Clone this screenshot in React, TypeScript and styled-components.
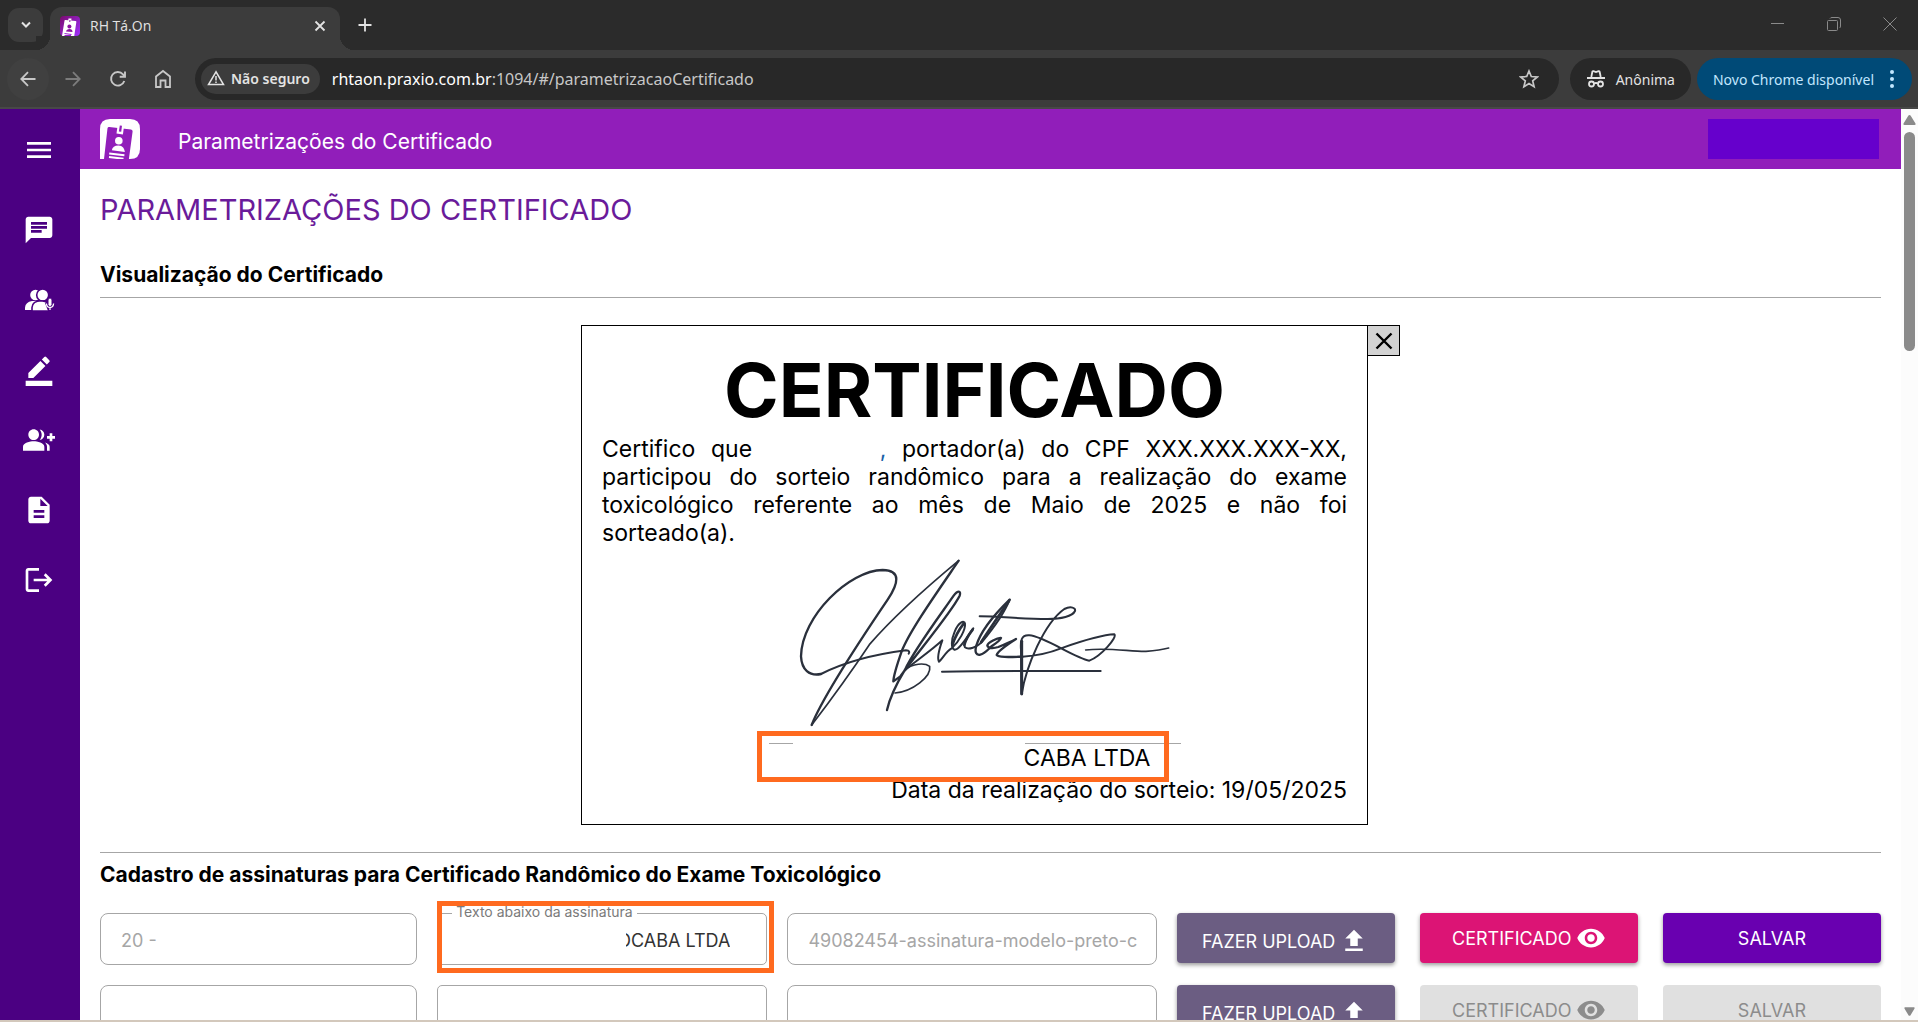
import React from "react";
import styled, { createGlobalStyle, css } from "styled-components";
import {
  MdBorderColor,
  MdChat,
  MdDescription,
  MdGroupAdd,
  MdLogout,
  MdMenu,
  MdUpload,
  MdVisibility,
} from "react-icons/md";

const GlobalStyle = createGlobalStyle`
  * { box-sizing: border-box; }
  body { margin: 0; background: #fff; font-family: Inter, "Open Sans", sans-serif; }
  button, input { font-family: inherit; }
  button { padding: 0; border: 0; background: none; color: inherit; }
  h1, h2, h3, p { margin: 0; }
`;

/* ---------- browser frame ---------- */

const Window = styled.div`
  height: 100vh;
  display: flex;
  flex-direction: column;
  overflow: hidden;
  border-bottom: 2px solid #d3c8bc;
`;

const TabStrip = styled.div`
  flex: none;
  height: 50px;
  padding: 0 16px 0 8px;
  display: flex;
  align-items: flex-start;
  background: #2b2b2b;
  color: #e3e3e3;
  font-family: "Open Sans", "Noto Sans", sans-serif;
`;

const TabSearch = styled.button`
  width: 35px;
  height: 34px;
  margin-top: 8px;
  display: grid;
  place-items: center;
  border-radius: 11px;
  background: #3c3c3c;
`;

const Tab = styled.div`
  position: relative;
  width: 290px;
  height: 43px;
  margin: 7px 0 0 7px;
  padding: 0 13px 6px 10px;
  display: flex;
  align-items: center;
  gap: 10px;
  border-radius: 12px 12px 0 0;
  background: #3c3c3c;
  font-size: 14px;

  &::before,
  &::after {
    content: "";
    position: absolute;
    bottom: 0;
    width: 14px;
    height: 14px;
  }
  &::before {
    left: -14px;
    background: radial-gradient(circle at 0 0, #2b2b2b 14px, #3c3c3c 14px);
  }
  &::after {
    right: -14px;
    background: radial-gradient(circle at 100% 0, #2b2b2b 14px, #3c3c3c 14px);
  }
`;

const TabTitle = styled.span`
  flex: 1;
`;

const PlainButton = styled.button<{ $w?: number; $h?: number }>`
  width: ${(p) => p.$w ?? 24}px;
  height: ${(p) => p.$h ?? 24}px;
  flex: none;
  display: grid;
  place-items: center;
`;

const WindowControls = styled.div`
  margin-left: auto;
  display: flex;
  gap: 32px;
  padding-top: 12px;
  color: #8a8a8a;
`;

const Toolbar = styled.div`
  flex: none;
  height: 59px;
  padding: 8px 6px 7px 7px;
  display: flex;
  align-items: center;
  background: #3c3c3c;
  border-bottom: 2px solid #484848;
  color: #c7c7c7;
  font-family: "Noto Sans", "Open Sans", sans-serif;
`;

const NavButton = styled.button<{ $ring?: boolean; $dim?: boolean }>`
  width: 42px;
  height: 42px;
  margin-right: 3px;
  flex: none;
  display: grid;
  place-items: center;
  border-radius: 50%;
  background: ${(p) => (p.$ring ? "#404040" : "transparent")};
  color: ${(p) => (p.$dim ? "#7c7c7c" : "#c7c7c7")};
`;

const AddressBar = styled.div`
  flex: 1;
  height: 42px;
  margin-left: 8px;
  padding: 0 18px 0 6px;
  display: flex;
  align-items: center;
  border-radius: 21px;
  background: #282828;
`;

const SecurityChip = styled.button`
  height: 30px;
  padding: 0 10px 2px 6px;
  display: flex;
  align-items: center;
  gap: 6px;
  border-radius: 15px;
  background: #3c3c3c;
  color: #e3e3e3;
  font-size: 14px;
  font-weight: 600;
`;

const Url = styled.span`
  flex: 1;
  margin-left: 12px;
  font-size: 16px;
  color: #c7c7c7;
  b {
    color: #fff;
    font-weight: 400;
  }
`;

const Pill = styled.button<{ $update?: boolean }>`
  height: 42px;
  flex: none;
  display: flex;
  align-items: center;
  gap: 10px;
  border-radius: 21px;
  font-size: 14px;
  ${(p) =>
    p.$update
      ? css`
          margin-left: 6px;
          padding: 0 14px 0 16px;
          gap: 12px;
          background: #004a77;
          color: #c2e7ff;
        `
      : css`
          margin-left: 11px;
          padding: 0 16px;
          background: #282828;
          color: #e3e3e3;
        `}
`;

/* ---------- application shell ---------- */

const Shell = styled.div`
  flex: 1;
  min-height: 0;
  display: flex;
`;

const Sidebar = styled.nav`
  flex: none;
  width: 80px;
  padding: 25px 2px 0 0;
  display: flex;
  flex-direction: column;
  align-items: center;
  gap: 38px;
  background: #4b0082;
  color: #fff;
`;

const SideButton = styled.button<{ $first?: boolean }>`
  width: 32px;
  height: 32px;
  margin-bottom: ${(p) => (p.$first ? 10 : 0)}px;
  display: grid;
  place-items: center;
`;

const Page = styled.div`
  flex: 1;
  min-width: 0;
  display: flex;
  flex-direction: column;
  overflow: hidden;
`;

const AppHeader = styled.header`
  flex: none;
  height: 60px;
  padding: 10px 22px 10px 20px;
  display: flex;
  align-items: center;
  background: #911eba;
  color: #fff;
`;

const HeaderTitle = styled.h2`
  margin-left: 38px;
  padding-top: 4px;
  font-size: 21px;
  font-weight: 400;
`;

const UserBlock = styled.div`
  width: 171px;
  height: 40px;
  margin-left: auto;
  background: #6600cc;
`;

const Content = styled.main`
  padding: 23px 20px 0;
`;

const PageTitle = styled.h1`
  line-height: 36px;
  font-size: 29px;
  font-weight: 400;
  color: #6a1b9a;
`;

const SectionTitle = styled.h3<{ $lead?: boolean }>`
  margin-top: ${(p) => (p.$lead ? 35 : 10)}px;
  line-height: 24px;
  font-size: 21px;
  font-weight: 700;
`;

const Rule = styled.hr<{ $above: number }>`
  height: 1px;
  margin: ${(p) => p.$above}px 0 0;
  border: 0;
  background: #a6a6a6;
`;

/* ---------- certificate ---------- */

const Preview = styled.section`
  margin-top: 27px;
  display: flex;
  justify-content: center;
  align-items: flex-start;
`;

const Certificate = styled.article`
  flex: 0 1 787px;
  padding: 22px 20px 20px;
  border: 1px solid #000;
  font-size: 23px;
  line-height: 28px;
`;

const CloseButton = styled.button`
  width: 33px;
  height: 31px;
  margin-left: -1px;
  display: grid;
  place-items: center;
  border: 1px solid #000;
  background: #d3d3d3;
`;

const CertificateTitle = styled.h2`
  line-height: 84px;
  font-size: 74px;
  font-weight: 700;
  text-align: center;
`;

const CertificateText = styled.p`
  margin-top: 3px;
  text-align: justify;
`;

const BlankName = styled.span`
  display: inline-block;
  width: 112px;
`;

const Comma = styled.span`
  color: #1a5fa8;
`;

const Signature = styled.svg`
  display: block;
  width: 392px;
  height: 170px;
  margin: 10px auto 16px;
  fill: none;
  stroke: #2a303c;
  stroke-linecap: round;
  stroke-linejoin: round;
`;

const Signer = styled.div`
  position: relative;
  width: 412px;
  margin: 0 auto;
`;

const SignerLine = styled.div`
  display: flex;
  justify-content: space-between;
`;

const LineSegment = styled.span<{ $w: number }>`
  width: ${(p) => p.$w}px;
  height: 1px;
  background: #a6a6a6;
`;

const SignerName = styled.p`
  padding-right: 30px;
  text-align: right;
`;

const DrawDate = styled.p`
  margin-top: 4px;
  text-align: right;
`;

const Highlight = styled.div<{ $inset: string }>`
  position: absolute;
  inset: ${(p) => p.$inset};
  border: 5px solid #ff6a1f;
  pointer-events: none;
`;

/* ---------- signature rows ---------- */

const Rows = styled.div`
  margin-top: 26px;
  display: grid;
  gap: 20px;
`;

const Row = styled.form`
  display: grid;
  grid-template-columns: 317fr 330fr 369fr 704fr;
  gap: 20px;
`;

const Actions = styled.div`
  display: grid;
  grid-template-columns: repeat(3, 1fr);
  gap: 25px;
`;

const Field = styled.div`
  position: relative;
  height: 52px;
`;

const TextInput = styled.input<{ $right?: boolean }>`
  width: 100%;
  height: 52px;
  padding: 2px 18px 0 20px;
  border: 1px solid #a6a6a6;
  border-radius: 8px;
  background: #fff;
  color: ${(p) => (p.$right ? "#333" : "#a6a6a6")};
  font-size: 18px;
  ${(p) =>
    p.$right &&
    css`
      padding-right: 36px;
      text-align: right;
      border-radius: 5px;
    `}
`;

const FloatingLabel = styled.label`
  position: absolute;
  left: 15px;
  top: -9px;
  padding: 0 4px;
  background: #fff;
  color: #7a7a7a;
  font-size: 14px;
  line-height: 16px;
`;

const Mask = styled.span`
  position: absolute;
  left: 16px;
  top: 10px;
  bottom: 10px;
  right: 141px;
  background: #fff;
`;

const tones = {
  upload: "#6b5d82",
  view: "#dc1475",
  save: "#6900b0",
};

const ActionButton = styled.button<{ $tone: keyof typeof tones }>`
  height: 50px;
  padding-top: ${(p) => (p.$tone === "upload" ? 6 : 0)}px;
  display: flex;
  align-items: center;
  justify-content: center;
  gap: 4px;
  border-radius: 4px;
  background: ${(p) => tones[p.$tone]};
  box-shadow: 0 2px 4px rgba(0, 0, 0, 0.4);
  color: #fff;
  font-size: 18px;
  &:disabled {
    background: #e0e0e0;
    color: #8c8c8c;
    box-shadow: none;
  }
`;

/* ---------- scroll bar ---------- */

const ScrollTrack = styled.div`
  flex: none;
  width: 17px;
  padding: 6px 0 4px;
  display: flex;
  flex-direction: column;
  align-items: center;
  justify-content: space-between;
  background: #fcfcfc;
`;

const ScrollTop = styled.div`
  display: grid;
  justify-items: center;
  gap: 7px;
`;

const ScrollThumb = styled.div`
  width: 11px;
  height: 219px;
  border-radius: 6px;
  background: #8a8a8a;
`;

const stroke = { fill: "none", stroke: "currentColor" } as const;

function BadgeMark({ size, card }: { size: number; card: string }) {
  return (
    <svg width={size} height={size} viewBox="0 0 40 40">
      <defs>
        <linearGradient id="badge" x1="0" y1="0" x2="1" y2="1">
          <stop offset="0" stopColor="#7a0b6d" />
          <stop offset="1" stopColor="#a030ff" />
        </linearGradient>
      </defs>
      {card === "dark" ? (
        <>
          <rect width="40" height="40" rx="8" fill="url(#badge)" />
          <path d="M9 9.500Q9 7.500 11 8l20 2q2 .2 1.700 2.200L28.500 40H4z" fill="#fff" />
          <path d="M17 5h6l-1 9h-6z" fill="#fff" />
          <path d="M19 8h2l-.5 4h-2z" fill="#8a12a0" />
          <circle cx="18.800" cy="21" r="4" fill="#8a12a0" />
          <path d="M12 31q1-5 7-5t6 6z" fill="#8a12a0" />
          <path d="M9 35l14 2M9 39h13" stroke="#9a20d0" strokeWidth="2" />
        </>
      ) : (
        <>
          <path d="M10 0h20q10 0 10 10v20q0 10-10 10H0V10Q0 0 10 0z" fill="#fff" />
          <path d="M7.500 9.300q.3-1.500 1.800-1.300L31 10.600q1.800.3 1.600 2L28.900 40H4z" fill={card} />
          <path d="M17.800 5l6.400.9-1.300 9.500-6.400-.9z" fill="#fff" />
          <path d="M19.800 6.500l2.200.3-.8 6-2.300-.3z" fill={card} />
          <circle cx="18.800" cy="21.800" r="3.800" fill="#fff" />
          <path d="M11.800 31.300q.8-5 6.800-4.900 5.900.5 6.300 6.700z" fill="#fff" />
          <path d="M9.200 34.600l15.200 1.600M9 38l14.500 1.800" stroke="#fff" strokeWidth="2" />
        </>
      )}
    </svg>
  );
}

function PeopleMic() {
  return (
    <svg width="32" height="32" viewBox="0 0 32 32" fill="#fff">
      <circle cx="12.500" cy="11" r="5.300" />
      <path d="M2 26v-2.500Q2.500 18 9 17h4v9z" />
      <g stroke="#4b0082" strokeWidth="1.600">
        <circle cx="19.700" cy="11" r="6" />
        <path d="M9 27v-3.500Q9.500 17 18 16.800q4 0 8 3V27z" />
      </g>
      <path d="M22 19h10v8H25z" fill="#4b0082" />
      <rect x="25" y="14" width="4" height="8.500" rx="2" stroke="#4b0082" strokeWidth="1" />
      <path d="M23.400 19.500q.4 4 3.600 4t3.600-4M27 23.500V26" fill="none" stroke="#fff" strokeWidth="1.300" />
    </svg>
  );
}

function SignatureDrawing() {
  return (
    <Signature viewBox="-6 22 1176 510" aria-label="Assinatura">
      <path
        strokeWidth="7"
        d="M92 526C120 455 215 305 320 150C352 102 362 62 305 61C205 62 62 200 60 320C62 360 85 380 120 373"
      />
      <path strokeWidth="6" d="M120 373C170 348 250 318 375 302C386 302 386 308 383 312" />
      <path strokeWidth="5" d="M92 526C150 450 215 360 265 285C330 210 440 110 533 33" />
      <path
        strokeWidth="7"
        d="M533 33C470 125 385 245 362 305C348 345 338 375 337 395L358 380C400 320 510 190 536 138C541 122 530 122 518 138C475 200 400 300 372 360C345 405 325 450 318 481"
      />
      <path strokeWidth="5" d="M372 360C395 342 430 338 446 350C452 380 395 425 342 430" />
      <path strokeWidth="6" d="M372 362C395 340 440 312 484 272C474 300 468 326 474 336C484 328 494 306 512 296C535 275 554 240 552 222C550 210 532 218 521 246C510 272 510 294 520 300C534 304 560 258 577 236C566 252 544 282 552 293C562 302 588 292 602 278C634 240 670 190 686 150" />
      <path strokeWidth="8" d="M514 286C522 262 534 240 548 222M550 286C554 268 564 254 575 240M600 278C625 240 655 195 684 154" />
      <path
        strokeWidth="7"
        d="M686 150C650 185 600 240 586 288C580 308 586 318 598 315C612 312 624 296 634 288C646 280 658 272 660 265C650 264 620 278 619 288C622 298 640 296 652 292C672 284 690 276 705 268C680 284 650 306 647 316C652 324 690 322 724 321"
      />
      <path
        strokeWidth="6"
        d="M724 321C770 318 810 308 840 296C900 275 960 255 1000 254C1010 262 960 320 925 333C880 325 790 260 745 257C720 255 718 275 720 300L722 434C735 350 790 220 850 178C870 168 885 175 882 184C875 200 840 208 800 208C720 208 660 200 596 200"
      />
      <path strokeWidth="9" d="M722 275L722 432" />
      <path strokeWidth="5" d="M914 301C980 293 1050 306 1095 305C1125 303 1145 300 1163 295" />
      <path strokeWidth="6" d="M483 366C640 362 800 365 959 364" />
    </Signature>
  );
}

interface RowData {
  id: string;
  company: string;
  text: string;
  file: string;
  active: boolean;
}

const rows: RowData[] = [
  { id: "r20", company: "20 -", text: "OCABA LTDA", file: "49082454-assinatura-modelo-preto-c", active: true },
  { id: "r21", company: "", text: "", file: "", active: false },
];

function SignatureRow({ row }: { row: RowData }) {
  return (
    <Row onSubmit={(e) => e.preventDefault()}>
      <Field>
        <TextInput aria-label="Empresa" defaultValue={row.company} disabled />
      </Field>
      <Field>
        <TextInput id={`${row.id}-text`} aria-label="Texto abaixo da assinatura" defaultValue={row.text} $right />
        {row.active && (
          <>
            <FloatingLabel htmlFor={`${row.id}-text`}>Texto abaixo da assinatura</FloatingLabel>
            <Mask />
            <Highlight $inset="-12px -7px -8px 0" />
          </>
        )}
      </Field>
      <Field>
        <TextInput aria-label="Arquivo" defaultValue={row.file} disabled />
      </Field>
      <Actions>
        <ActionButton type="button" $tone="upload">
          FAZER UPLOAD <MdUpload size={30} />
        </ActionButton>
        <ActionButton type="button" $tone="view" disabled={!row.active}>
          CERTIFICADO <MdVisibility size={30} />
        </ActionButton>
        <ActionButton type="submit" $tone="save" disabled={!row.active}>
          SALVAR
        </ActionButton>
      </Actions>
    </Row>
  );
}

function BrowserChrome() {
  return (
    <>
      <TabStrip>
        <TabSearch aria-label="Pesquisar guias">
          <svg width="12" height="12" viewBox="0 0 12 12" {...stroke} strokeWidth="2">
            <path d="M2 3.500l4 4 4-4" />
          </svg>
        </TabSearch>
        <Tab>
          <BadgeMark size={20} card="dark" />
          <TabTitle>RH Tá.On</TabTitle>
          <PlainButton $w={14} aria-label="Fechar guia">
            <svg width="12" height="12" viewBox="0 0 12 12" {...stroke} strokeWidth="1.800">
              <path d="M1.500 1.500l9 9M10.500 1.500l-9 9" />
            </svg>
          </PlainButton>
        </Tab>
        <PlainButton $w={50} $h={50} aria-label="Nova guia">
          <svg width="14" height="14" viewBox="0 0 14 14" {...stroke} strokeWidth="1.800">
            <path d="M7 .5v13M.5 7h13" />
          </svg>
        </PlainButton>
        <WindowControls>
          <PlainButton aria-label="Minimizar">
            <svg width="14" height="14" viewBox="0 0 14 14" {...stroke}>
              <path d="M0 6.500h13" />
            </svg>
          </PlainButton>
          <PlainButton aria-label="Restaurar">
            <svg width="14" height="14" viewBox="0 0 14 14" {...stroke}>
              <rect x=".5" y="3.500" width="10" height="10" rx="1" />
              <path d="M3 1.500Q3.500.5 5 .5h6q2.500 0 2.500 2.500v6q0 1.500-1 2" />
            </svg>
          </PlainButton>
          <PlainButton aria-label="Fechar">
            <svg width="14" height="14" viewBox="0 0 14 14" {...stroke}>
              <path d="M.5.5l13 13M13.500.5l-13 13" />
            </svg>
          </PlainButton>
        </WindowControls>
      </TabStrip>
      <Toolbar>
        <NavButton $ring aria-label="Voltar">
          <svg width="16" height="16" viewBox="0 0 16 16" {...stroke} strokeWidth="1.800">
            <path d="M15.500 8H1.500M8 1.200L1.300 8 8 14.800" />
          </svg>
        </NavButton>
        <NavButton $dim aria-label="Avançar">
          <svg width="16" height="16" viewBox="0 0 16 16" {...stroke} strokeWidth="1.800">
            <path d="M.5 8h14M8 1.200L14.700 8 8 14.800" />
          </svg>
        </NavButton>
        <NavButton aria-label="Recarregar">
          <svg width="18" height="18" viewBox="0 0 18 18" {...stroke} strokeWidth="1.900">
            <path d="M15.300 11A6.800 6.800 0 1 1 14 4.300l2 2.200M16 1.500v5.200h-5.300" />
          </svg>
        </NavButton>
        <NavButton aria-label="Página inicial">
          <svg width="18" height="20" viewBox="0 0 18 20" {...stroke} strokeWidth="1.800">
            <path d="M2 18V7.500L9 2l7 5.500V18h-4.500v-6.500h-5V18z" />
          </svg>
        </NavButton>
        <AddressBar>
          <SecurityChip>
            <svg width="18" height="16" viewBox="0 0 18 16" {...stroke} strokeWidth="1.500">
              <path d="M9 1.800L1.500 14.500h15zM9 6v4.500M9 11.500v1.500" />
            </svg>
            Não seguro
          </SecurityChip>
          <Url>
            <b>rhtaon.praxio.com.br</b>:1094/#/parametrizacaoCertificado
          </Url>
          <PlainButton aria-label="Favoritar">
            <svg width="20" height="20" viewBox="0 0 20 20" {...stroke} strokeWidth="1.700">
              <path d="M10 2l2.300 5.500 6 .5-4.600 3.900 1.400 5.800L10 14.600l-5.100 3.100 1.400-5.800L1.700 8l6-.5z" />
            </svg>
          </PlainButton>
        </AddressBar>
        <Pill>
          <svg width="20" height="20" viewBox="0 0 20 20" {...stroke} strokeWidth="1.800">
            <path d="M5.300 8l1-5Q6.500 2 7.500 2.200L10 3l2.500-.8q1-.2 1.200.8l1 5M1 9h18M8 14.500q2-1 4 0" />
            <circle cx="5.500" cy="15" r="2.500" />
            <circle cx="14.500" cy="15" r="2.500" />
          </svg>
          Anônima
        </Pill>
        <Pill $update>
          Novo Chrome disponível
          <svg width="12" height="20" viewBox="0 0 12 20" fill="currentColor">
            <circle cx="6" cy="3" r="2" />
            <circle cx="6" cy="10" r="2" />
            <circle cx="6" cy="17" r="2" />
          </svg>
        </Pill>
      </Toolbar>
    </>
  );
}

const sideItems = [
  { label: "Mensagens", icon: <MdChat size={32} /> },
  { label: "Entrevistas", icon: <PeopleMic /> },
  { label: "Assinaturas", icon: <MdBorderColor size={32} /> },
  { label: "Adicionar usuários", icon: <MdGroupAdd size={32} /> },
  { label: "Documentos", icon: <MdDescription size={32} /> },
  { label: "Sair", icon: <MdLogout size={32} /> },
];

export default function App() {
  return (
    <Window>
      <GlobalStyle />
      <BrowserChrome />
      <Shell>
        <Sidebar>
          <SideButton $first aria-label="Menu">
            <MdMenu size={32} />
          </SideButton>
          {sideItems.map((item) => (
            <SideButton key={item.label} aria-label={item.label}>
              {item.icon}
            </SideButton>
          ))}
        </Sidebar>
        <Page>
          <AppHeader>
            <BadgeMark size={40} card="#911eba" />
            <HeaderTitle>Parametrizações do Certificado</HeaderTitle>
            <UserBlock />
          </AppHeader>
          <Content>
            <PageTitle>PARAMETRIZAÇÕES DO CERTIFICADO</PageTitle>
            <SectionTitle $lead>Visualização do Certificado</SectionTitle>
            <Rule $above={10} />
            <Preview>
              <Certificate>
                <CertificateTitle>CERTIFICADO</CertificateTitle>
                <CertificateText>
                  Certifico que <BlankName />
                  <Comma>,</Comma> portador(a) do CPF XXX.XXX.XXX-XX, participou do sorteio randômico para a
                  realização do exame toxicológico referente ao mês de Maio de 2025 e não foi sorteado(a).
                </CertificateText>
                <SignatureDrawing />
                <Signer>
                  <SignerLine>
                    <LineSegment $w={24} />
                    <LineSegment $w={156} />
                  </SignerLine>
                  <SignerName>CABA LTDA</SignerName>
                  <Highlight $inset="-12px 12px -10px -12px" />
                </Signer>
                <DrawDate>Data da realização do sorteio: 19/05/2025</DrawDate>
              </Certificate>
              <CloseButton aria-label="Fechar certificado">
                <svg width="18" height="18" viewBox="0 0 18 18" {...stroke} strokeWidth="2.400">
                  <path d="M1.500 1.500l15 15M16.500 1.500l-15 15" />
                </svg>
              </CloseButton>
            </Preview>
            <Rule $above={27} />
            <SectionTitle>Cadastro de assinaturas para Certificado Randômico do Exame Toxicológico</SectionTitle>
            <Rows>
              {rows.map((row) => (
                <SignatureRow key={row.id} row={row} />
              ))}
            </Rows>
          </Content>
        </Page>
        <ScrollTrack>
          <ScrollTop>
            <svg width="13" height="10" viewBox="0 0 13 10" fill="#8a8a8a">
              <path d="M6.500 0q.8 0 1.200.7l4.800 7.800q.5 1.500-1 1.500h-10q-1.500 0-1-1.500L5.300.7Q5.700 0 6.500 0z" />
            </svg>
            <ScrollThumb />
          </ScrollTop>
          <svg width="11" height="9" viewBox="0 0 13 10" fill="#8a8a8a">
            <path d="M6.500 10q.8 0 1.200-.7l4.800-7.800Q13 0 11.500 0h-10Q0 0 .5 1.500l4.800 7.800q.4.7 1.200.7z" />
          </svg>
        </ScrollTrack>
      </Shell>
    </Window>
  );
}
